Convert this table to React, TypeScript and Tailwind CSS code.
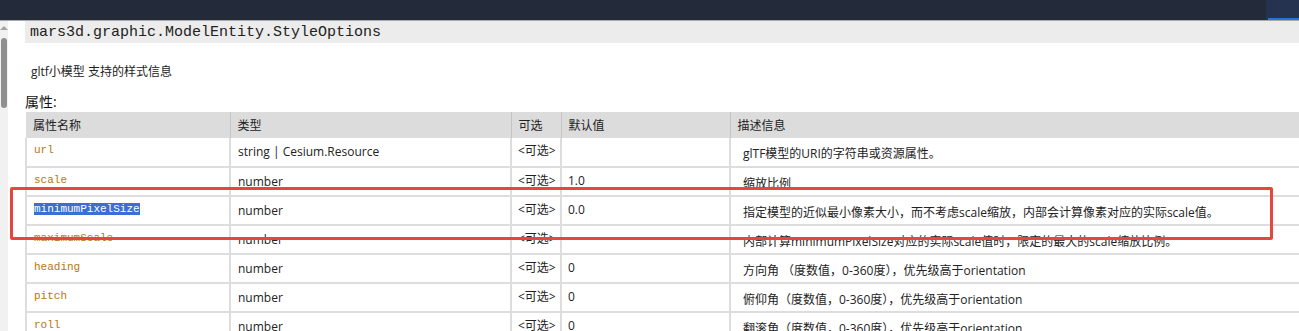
const rows = [
  { name: "url", type: "string | Cesium.Resource", def: "", desc: "glTF模型的URI的字符串或资源属性。" },
  { name: "scale", type: "number", def: "1.0", desc: "缩放比例" },
  { name: "minimumPixelSize", type: "number", def: "0.0", desc: "指定模型的近似最小像素大小，而不考虑scale缩放，内部会计算像素对应的实际scale值。", selected: true },
  { name: "maximumScale", type: "number", def: "", desc: "内部计算minimumPixelSize对应的实际scale值时，限定的最大的scale缩放比例。" },
  { name: "heading", type: "number", def: "0", desc: "方向角 （度数值，0-360度），优先级高于orientation" },
  { name: "pitch", type: "number", def: "0", desc: "俯仰角（度数值，0-360度），优先级高于orientation" },
  { name: "roll", type: "number", def: "0", desc: "翻滚角（度数值，0-360度），优先级高于orientation" },
];

const sans = "font-['Open_Sans','Noto_Sans_CJK_SC',sans-serif]";
const mono = "font-['Liberation_Mono','DejaVu_Sans_Mono',monospace]";

const App = () => {
  return (
    <div className={`relative h-[331px] w-[1299px] overflow-hidden bg-white text-[#222] ${sans}`}>
      {/* top bar */}
      <div className="flex h-[20px] bg-[#232a39]">
        <div className="flex-1" />
        <div className="flex w-[33px] flex-col justify-end bg-[#253350]">
          <div className="ml-[2px] h-[2px] bg-[#2f6fe0]" />
        </div>
      </div>
      <div className="h-[1px] bg-[#a9a9a9]" />

      <div className="flex">
        {/* scrollbar */}
        <div className="flex h-[310px] w-[10px] flex-col items-center bg-[#f1f1f1]">
          <div className="mt-[5px] h-0 w-0 border-x-[4px] border-b-[4px] border-x-transparent border-b-[#a3a3a3]" />
          <div className="mt-[8px] h-[70px] w-[6px] rounded-full bg-[#8f8f8f]" />
        </div>

        <div className="ml-[17px] flex-1">
          <div className={`h-[22px] bg-[#ececec] pl-[5px] text-[15px] leading-[23px] text-[#222] ${mono}`}>
            mars3d.graphic.ModelEntity.StyleOptions
          </div>
          <div className="mt-[21px] pl-[6px] text-[12px] leading-[16px]">gltf小模型 支持的样式信息</div>
          <div className="mt-[13px] text-[14px] leading-[18px] text-[#111]">属性:</div>

          <table className="mt-[1px] w-[1320px] table-fixed border-collapse text-[12px]">
            <colgroup>
              <col className="w-[204px]" />
              <col className="w-[281px]" />
              <col className="w-[50px]" />
              <col className="w-[169px]" />
              <col />
            </colgroup>
            <thead>
              <tr className="h-[26px] bg-[#dcdcdc] text-left text-[12px] font-normal">
                <th className="border-r border-[#c4c4c4] pl-[7px] pt-[2px] font-normal">属性名称</th>
                <th className="border-r border-[#c4c4c4] pl-[7px] pt-[2px] font-normal">类型</th>
                <th className="border-r border-[#c4c4c4] pl-[7px] pt-[2px] font-normal">可选</th>
                <th className="border-r border-[#c4c4c4] pl-[7px] pt-[2px] font-normal">默认值</th>
                <th className="pl-[7px] pt-[2px] font-normal">描述信息</th>
              </tr>
            </thead>
            <tbody>
              {rows.map((r) => (
                <tr key={r.name} className="h-[29px] border-b-2 border-[#dddddd] align-top">
                  <td className={`border-x-2 border-[#dddddd] pl-[7px] pt-[5px] text-[11px] leading-[14px] text-[#b8760f] ${mono}`}>
                    {r.selected ? <span className="bg-[#3b6fd6] text-white">{r.name}</span> : r.name}
                  </td>
                  <td className="border-r-2 border-[#dddddd] pl-[7px] pt-[6px] leading-[16px]">{r.type}</td>
                  <td className="border-r-2 border-[#dddddd] pl-[6px] pt-[5px] leading-[16px]">&lt;可选&gt;</td>
                  <td className="border-r-2 border-[#dddddd] pl-[6px] pt-[5px] leading-[16px]">{r.def}</td>
                  <td className="pl-[12px] pt-[8px] leading-[16px]">{r.desc}</td>
                </tr>
              ))}
            </tbody>
          </table>
        </div>
      </div>

      {/* annotation box */}
      <div className="absolute left-[10px] top-[187px] h-[53px] w-[1263px] rounded-[2px] border-[3px] border-[#e8453c]" />
    </div>
  );
};

export default App;
